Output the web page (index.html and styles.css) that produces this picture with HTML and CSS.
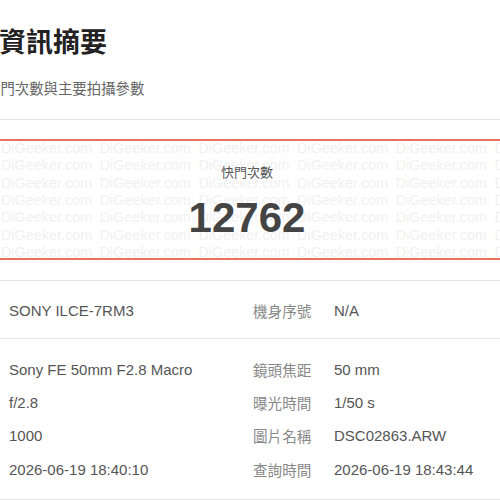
FILE: index.html
```html
<!DOCTYPE html>
<html lang="zh-Hant">
<head>
<meta charset="utf-8">
<link rel="stylesheet" href="styles.css">
</head>
<body>
<div class="page">
  <header class="head">
    <h1 class="title">資訊摘要</h1>
    <p class="subtitle">快門次數與主要拍攝參數</p>
  </header>

  <section class="shutter">
    <div class="watermark" aria-hidden="true">
      <span>DiGeeker.com</span><span>DiGeeker.com</span><span>DiGeeker.com</span><span>DiGeeker.com</span><span>DiGeeker.com</span><span>DiGeeker.com</span>
      <span>DiGeeker.com</span><span>DiGeeker.com</span><span>DiGeeker.com</span><span>DiGeeker.com</span><span>DiGeeker.com</span><span>DiGeeker.com</span>
      <span>DiGeeker.com</span><span>DiGeeker.com</span><span>DiGeeker.com</span><span>DiGeeker.com</span><span>DiGeeker.com</span><span>DiGeeker.com</span>
      <span>DiGeeker.com</span><span>DiGeeker.com</span><span>DiGeeker.com</span><span>DiGeeker.com</span><span>DiGeeker.com</span><span>DiGeeker.com</span>
      <span>DiGeeker.com</span><span>DiGeeker.com</span><span>DiGeeker.com</span><span>DiGeeker.com</span><span>DiGeeker.com</span><span>DiGeeker.com</span>
      <span>DiGeeker.com</span><span>DiGeeker.com</span><span>DiGeeker.com</span><span>DiGeeker.com</span><span>DiGeeker.com</span><span>DiGeeker.com</span>
      <span>DiGeeker.com</span><span>DiGeeker.com</span><span>DiGeeker.com</span><span>DiGeeker.com</span><span>DiGeeker.com</span><span>DiGeeker.com</span>
    </div>
    <div class="shutter-label">快門次數</div>
    <div class="shutter-count">12762</div>
  </section>

  <section class="info info-first">
    <div class="row">
      <div class="cell-main">SONY ILCE-7RM3</div>
      <div class="cell-label">機身序號</div>
      <div class="cell-value">N/A</div>
    </div>
  </section>

  <section class="info info-second">
    <div class="row">
      <div class="cell-main">Sony FE 50mm F2.8 Macro</div>
      <div class="cell-label">鏡頭焦距</div>
      <div class="cell-value">50 mm</div>
    </div>
    <div class="row">
      <div class="cell-main">f/2.8</div>
      <div class="cell-label">曝光時間</div>
      <div class="cell-value">1/50 s</div>
    </div>
    <div class="row">
      <div class="cell-main">1000</div>
      <div class="cell-label">圖片名稱</div>
      <div class="cell-value">DSC02863.ARW</div>
    </div>
    <div class="row">
      <div class="cell-main">2026-06-19 18:40:10</div>
      <div class="cell-label">查詢時間</div>
      <div class="cell-value">2026-06-19 18:43:44</div>
    </div>
  </section>
</div>
</body>
</html>
```

FILE: styles.css
```css
html, body {
  margin: 0;
  padding: 0;
  background: #ffffff;
}

body {
  font-family: "Liberation Sans", "Noto Sans CJK TC", sans-serif;
  color: #555555;
  overflow: hidden;
}

.page {
  margin: 0 -8px 0 -14px;
}

.head {
  padding: 25px 0 21px 0;
  border-bottom: 1px solid #e4e4e4;
}

.title {
  margin: 0 0 0 13px;
  font-family: "Noto Sans CJK TC", sans-serif;
  font-size: 27px;
  line-height: 32px;
  font-weight: 700;
  color: #222222;
}

.subtitle {
  margin: 21px 0 0 0;
  font-family: "Noto Sans CJK TC", sans-serif;
  font-size: 14.4px;
  line-height: 20px;
  color: #666666;
}

.shutter {
  position: relative;
  overflow: hidden;
  margin-top: 19px;
  border-top: 2px solid #e7735d;
  border-bottom: 2px solid #e7735d;
  padding: 22px 0 16px 0;
  display: flex;
  flex-direction: column;
  align-items: center;
}

.watermark {
  position: absolute;
  top: -1px;
  left: 15px;
  display: grid;
  grid-template-columns: repeat(6, 98.7px);
  grid-auto-rows: 17.33px;
  font-family: "Liberation Sans", sans-serif;
  font-size: 14.4px;
  line-height: 17.33px;
  color: #f1f1f1;
  white-space: nowrap;
  pointer-events: none;
}

.shutter-label {
  position: relative;
  font-family: "Noto Sans CJK TC", sans-serif;
  font-size: 13px;
  line-height: 18px;
  color: #555555;
}

.shutter-count {
  position: relative;
  margin-top: 13px;
  font-family: "Liberation Sans", sans-serif;
  font-size: 42px;
  line-height: 48px;
  font-weight: 700;
  color: #444444;
}

.info {
  border-top: 1px solid #e4e4e4;
}

.info-first {
  margin-top: 20px;
  padding: 13px 0 11px 0;
}

.info-second {
  padding: 13px 0 13px 0;
  border-bottom: 1px solid #e4e4e4;
}

.row {
  display: grid;
  grid-template-columns: 244px 81px 1fr;
  align-items: center;
  height: 33.35px;
  padding-left: 23px;
  font-size: 15px;
}

.cell-main,
.cell-value {
  color: #555555;
}

.cell-label {
  font-family: "Noto Sans CJK TC", sans-serif;
  font-size: 14.6px;
  color: #888888;
}
```
